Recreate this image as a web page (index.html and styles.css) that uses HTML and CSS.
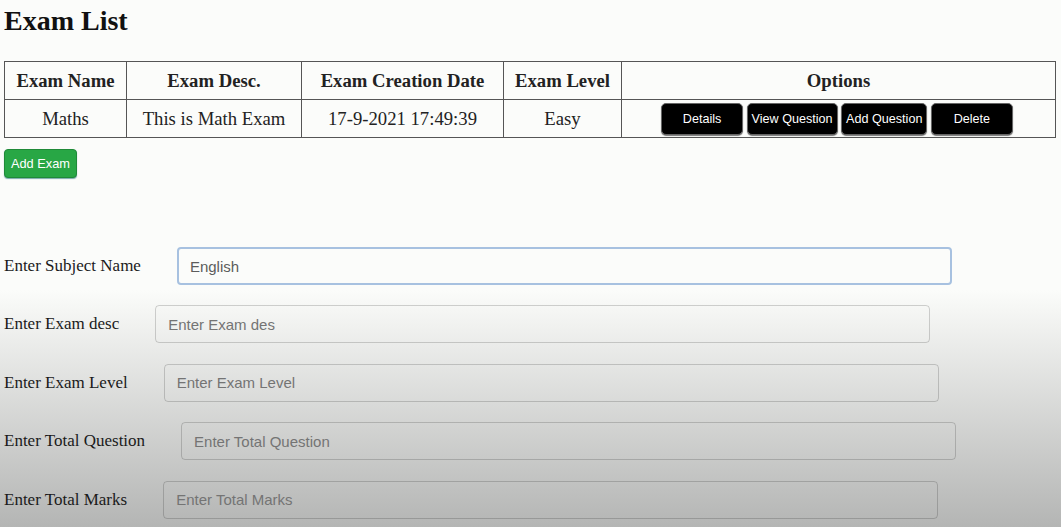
FILE: index.html
```html
<!DOCTYPE html>
<html lang="en">
<head>
<meta charset="utf-8">
<title>Exam List</title>
<link rel="stylesheet" href="styles.css">
</head>
<body>
<h1 class="title">Exam List</h1>
<table class="exam-table">
  <colgroup>
    <col class="c1"><col class="c2"><col class="c3"><col class="c4"><col class="c5">
  </colgroup>
  <thead>
    <tr>
      <th>Exam Name</th>
      <th>Exam Desc.</th>
      <th>Exam Creation Date</th>
      <th>Exam Level</th>
      <th>Options</th>
    </tr>
  </thead>
  <tbody>
    <tr>
      <td>Maths</td>
      <td>This is Math Exam</td>
      <td>17-9-2021 17:49:39</td>
      <td>Easy</td>
      <td class="options">
        <button class="btn-dark">Details</button>
        <button class="btn-dark">View Question</button>
        <button class="btn-dark">Add Question</button>
        <button class="btn-dark">Delete</button>
      </td>
    </tr>
  </tbody>
</table>
<button class="btn-green">Add Exam</button>

<form class="exam-form">
  <div class="row">
    <label class="lbl">Enter Subject Name</label>
    <input class="field focused" type="text" value="English" placeholder="Enter Subject Name">
  </div>
  <div class="row">
    <label class="lbl">Enter Exam desc</label>
    <input class="field" type="text" placeholder="Enter Exam des">
  </div>
  <div class="row">
    <label class="lbl">Enter Exam Level</label>
    <input class="field" type="text" placeholder="Enter Exam Level">
  </div>
  <div class="row">
    <label class="lbl">Enter Total Question</label>
    <input class="field" type="text" placeholder="Enter Total Question">
  </div>
  <div class="row">
    <label class="lbl">Enter Total Marks</label>
    <input class="field" type="text" placeholder="Enter Total Marks">
  </div>
</form>
</body>
</html>
```

FILE: styles.css
```css
html {
  background: linear-gradient(to bottom, #fbfcfa 0, #fbfcfa 290px, #b4b5b4 527px);
  min-height: 100%;
}
body {
  margin: 0;
  padding: 0 4px;
  font-family: "Liberation Serif", "Times New Roman", serif;
  color: #1a1a1a;
}
.title {
  font-size: 28px;
  line-height: 31px;
  font-weight: bold;
  margin: 5px 0 25px;
  color: #111;
}
.exam-table {
  border-collapse: collapse;
  width: 1051px;
  table-layout: fixed;
  border: 1px solid #555;
}
.c1 { width: 122px; }
.c2 { width: 175px; }
.c3 { width: 202px; }
.c4 { width: 118px; }
.c5 { width: 434px; }
.exam-table th,
.exam-table td {
  border: 1px solid #555;
  height: 37px;
  padding: 0;
  text-align: center;
  vertical-align: middle;
  font-size: 18.7px;
  color: #222;
}
.exam-table th { font-weight: bold; }
.options { white-space: nowrap; font-size: 0 !important; padding-right: 3px !important; }
.btn-dark {
  display: inline-block;
  min-width: 82px;
  height: 32px;
  margin: 0 1.75px;
  padding: 0 4px;
  background: #000;
  color: #fff;
  border: 1px solid #666;
  border-radius: 5px;
  box-shadow: 0 1px 1px #777;
  font-family: "Liberation Sans", Arial, sans-serif;
  font-size: 12.6px;
  vertical-align: middle;
}
.btn-green {
  display: block;
  margin-top: 11px;
  width: 73px;
  height: 29px;
  padding: 0;
  background: #28a745;
  color: #fff;
  border: 1px solid #1f8a38;
  border-radius: 4px;
  box-shadow: 0 1px 1px #7aa;
  font-family: "Liberation Sans", Arial, sans-serif;
  font-size: 12.8px;
}
.exam-form {
  margin-top: 69px;
  display: flex;
  flex-direction: column;
  gap: 20.4px;
}
.row {
  display: flex;
  align-items: center;
}
.lbl {
  font-size: 17px;
  margin-right: 36px;
  color: #1a1a1a;
}
.field {
  box-sizing: border-box;
  width: 775px;
  height: 38px;
  padding: 0 12px;
  border: 1px solid rgba(0, 0, 0, 0.17);
  border-radius: 4px;
  background: transparent;
  font-family: "Liberation Sans", Arial, sans-serif;
  font-size: 15px;
  color: #5c5c5c;
  outline: none;
}
.field::placeholder { color: #747474; }
.field.focused {
  border: 2px solid #a7c1e0;
  padding: 0 11px;
}
```
